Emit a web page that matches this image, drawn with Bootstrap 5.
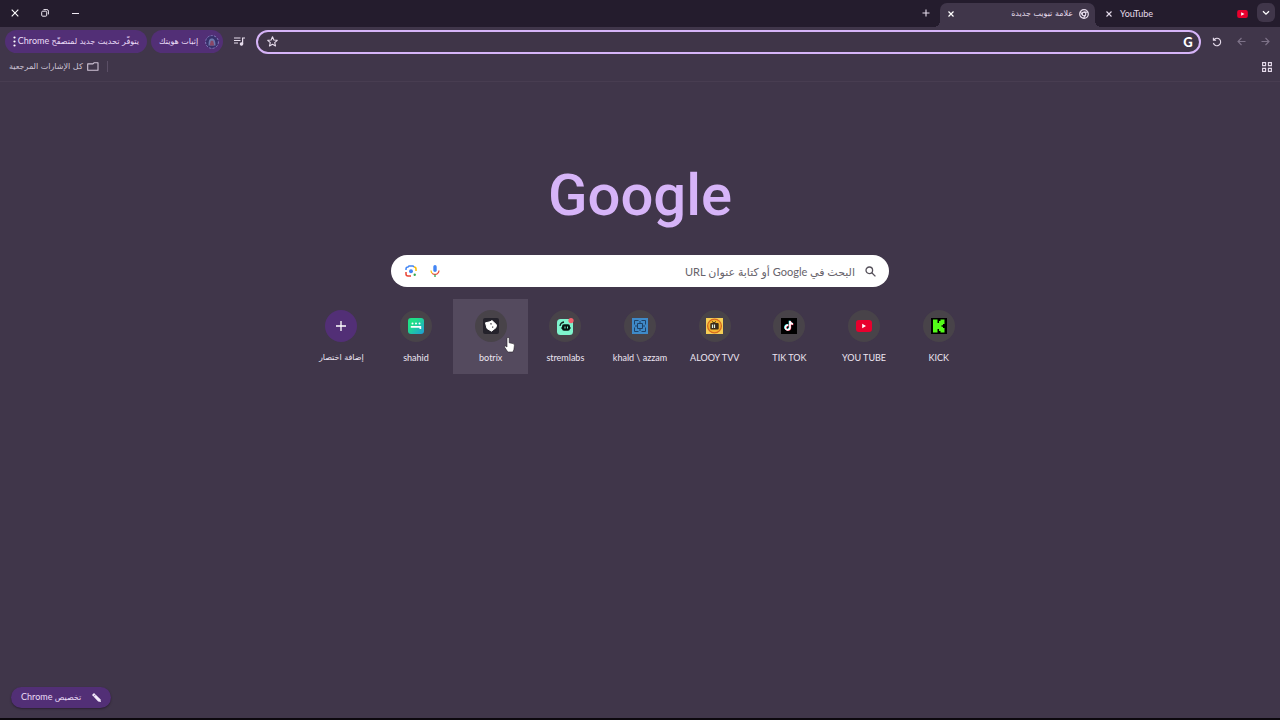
<!DOCTYPE html>
<html lang="ar" dir="rtl">
<head>
<meta charset="utf-8">
<meta name="viewport" content="width=device-width, initial-scale=1">
<title>علامة تبويب جديدة</title>
<link href="https://cdn.jsdelivr.net/npm/bootstrap@5.3.0/dist/css/bootstrap.min.css" rel="stylesheet">
<style>
:root{--strip:#241c2d;--panel:#40364a;--chip:#522f76;--lilac:#d6b4f8;--ink:#e6dcec}
body{background:var(--panel);color:var(--ink);font-family:Lato,"DejaVu Sans",sans-serif;font-size:9px;line-height:12px;border-bottom:2px solid #0c080e;overflow:hidden}
svg{display:block;flex:none}
button,input{font:inherit;color:inherit}
.plain{background:none;border:0;padding:0;color:inherit;display:flex;align-items:center;justify-content:center;width:24px;height:20px}
.strip{background:var(--strip);height:27px;padding:3px 5px 0 0}
.tab-search{width:18px;height:19px;background:#40364a;border-radius:6px}
.page-tab{height:24px}
.tab-idle{width:162px;padding:0 9px 3px 9px}
.tab-live{width:155px;background:var(--panel);border-radius:7px 7px 0 0;padding:0 6px 3px 6px;position:relative}
.tab-live::before,.tab-live::after{content:"";position:absolute;bottom:0;width:6px;height:6px}
.tab-live::before{right:-6px;background:radial-gradient(circle at 100% 0,transparent 6px,var(--panel) 6px)}
.tab-live::after{left:-6px;background:radial-gradient(circle at 0 0,transparent 6px,var(--panel) 6px)}
.tab-title{padding:0 6px}
.tab-close{width:10px;height:10px}
.new-tab{width:28px}
.win{width:30px}
.tools{height:29px;padding:0 3px 0 5px}
.faded{color:#7d7288}
.omni{height:24px;border:2px solid var(--lilac);border-radius:12px;background:#3f3548;padding:0 5px 0 9px;margin:0 4px 0 1px}
.omni input{background:none;border:0;outline:0;min-width:0}
.g-mark{font-weight:900;font-size:13px;color:#fff;width:12px}
.chip{background:var(--chip);border:0;border-radius:12px;height:23px;color:#eadcf6;white-space:nowrap}
.chip-id{width:72px}
.chip-update{width:142px}
.ar{font-family:"DejaVu Sans",sans-serif;font-size:8px}
.marks{height:26px;padding:0 8px 4px 9px;border-bottom:1px solid #483d51}
.marks a{color:#cfc4d6}
.rule{width:1px;height:11px;background:#5b4f66}
.wordmark{color:var(--lilac);font-family:Roboto,sans-serif;font-weight:500;font-size:58px;line-height:72px;margin:77px 0 0}
.find{width:498px;max-width:94%;height:32px;margin-top:24px;background:#fff;border-radius:16px;padding:0 13px 0 8px}
.find input{background:none;border:0;outline:0;color:#333;font-size:11px;line-height:20px;height:24px;min-width:0;padding:0 10px}
.find input::placeholder{color:#66626a;opacity:1}
.tiles{width:672px;max-width:100%;display:grid;grid-template-columns:repeat(9,1fr);margin-top:12px}
.tile{height:75px;padding-top:11px;color:#eee6f2;position:relative;white-space:nowrap}
.tile:hover{color:#fff}
.tile.hot{background:#544a5e}
.disc{width:32px;height:32px;border-radius:50%;background:#484349;margin-bottom:10px}
.disc.add{background:var(--chip)}
.pointer{position:absolute;left:51px;top:38px}
.custom{height:21px;min-width:100px;margin:0 0 10px 11px;padding:0 10px;box-shadow:0 1px 2px #2a2031}
</style>
</head>
<body class="d-flex flex-column min-vh-100">
<header>
  <div class="strip d-flex align-items-start">
    <button class="plain tab-search" aria-label="البحث في علامات التبويب"><svg width="8" height="6" viewBox="0 0 8 6" fill="none" stroke="#fff" stroke-width="1.3"><path d="M1 1.2 4 4.2 7 1.2"/></svg></button>
    <div class="page-tab tab-idle d-flex align-items-center">
      <svg width="11" height="8" viewBox="0 0 16 12"><rect width="16" height="12" rx="3" fill="#e8002d"/><path d="M6 3.2v5.6L11 6z" fill="#fff"/></svg>
      <span class="flex-grow-1 text-start tab-title" dir="ltr">YouTube</span>
      <button class="plain tab-close" aria-label="إغلاق YouTube"><svg width="6" height="6" viewBox="0 0 6 6" stroke="#e6dcec" stroke-width="1.1"><path d="M.5.5l5 5M5.5.5l-5 5"/></svg></button>
    </div>
    <div class="page-tab tab-live d-flex align-items-center">
      <svg width="10" height="10" viewBox="0 0 10 10" fill="none" stroke="#e6dcec"><circle cx="5" cy="5" r="4.3" stroke-width="1.2"/><circle cx="5" cy="5" r="1.8" stroke-width="1.2"/><path d="M5 3.1h4M3.4 6 1.3 2.6M6.6 6 4.6 9.3" stroke-width="1.2"/></svg>
      <span class="flex-grow-1 ar tab-title">علامة تبويب جديدة</span>
      <button class="plain tab-close" aria-label="إغلاق"><svg width="6" height="6" viewBox="0 0 6 6" stroke="#fff" stroke-width="1.2"><path d="M.5.5l5 5M5.5.5l-5 5"/></svg></button>
    </div>
    <button class="plain new-tab" aria-label="علامة تبويب جديدة"><svg width="8" height="8" viewBox="0 0 8 8" stroke="#e6dcec" stroke-width="1.1"><path d="M4 .5v7M.5 4h7"/></svg></button>
    <div class="flex-grow-1"></div>
    <button class="plain win" aria-label="تصغير"><svg width="7" height="7" viewBox="0 0 7 7" stroke="#f0eaf4"><path d="M0 3.5h7"/></svg></button>
    <button class="plain win" aria-label="استعادة"><svg width="8" height="8" viewBox="0 0 8 8" fill="none" stroke="#f0eaf4"><rect x=".7" y="2.2" width="5" height="5" rx="1"/><path d="M2.5.6h3.4a1.5 1.5 0 0 1 1.5 1.5v3.3"/></svg></button>
    <button class="plain win" aria-label="إغلاق النافذة"><svg width="8" height="8" viewBox="0 0 8 8" stroke="#fff" stroke-width="1.1"><path d="M.7.7l6.6 6.6M7.3.7.7 7.3"/></svg></button>
  </div>
  <nav class="tools d-flex align-items-center">
    <button class="plain faded" aria-label="التقدم"><svg width="9" height="9" viewBox="0 0 9 9" fill="none" stroke="currentColor" stroke-width="1.1"><path d="M.5 4.5h7.4M4.5 1l3.5 3.5L4.5 8"/></svg></button>
    <button class="plain faded" aria-label="الرجوع"><svg width="9" height="9" viewBox="0 0 9 9" fill="none" stroke="currentColor" stroke-width="1.1"><path d="M8.500 4.500H1.100M4.500 1 1 4.500 4.500 8"/></svg></button>
    <button class="plain" aria-label="إعادة التحميل"><svg width="10" height="10" viewBox="0 0 10 10" fill="none" stroke="currentColor" stroke-width="1.1"><path d="M1.900 2.900A3.700 3.700 0 1 1 1.400 6M1.400.8v2.500h2.700"/></svg></button>
    <div class="omni d-flex align-items-center flex-grow-1">
      <span class="g-mark text-center">G</span>
      <input class="flex-grow-1" type="text" aria-label="شريط العناوين">
      <svg width="11" height="11" viewBox="0 0 12 12" fill="none" stroke="#e6dcec" stroke-width="1.2" stroke-linejoin="round"><path d="M6 .9 7.500 4.400l3.700.3-2.800 2.500.9 3.700L6 9 2.700 10.900l.9-3.700L.8 4.700l3.700-.3z"/></svg>
    </div>
    <button class="plain mx-1" aria-label="التحكم في الوسائط"><svg width="11" height="9" viewBox="0 0 11 9" fill="none" stroke="currentColor" stroke-width="1.200"><path d="M0 1h6.500M0 3.500h6.500M0 6h4M8.600 7V1H11"/><circle cx="7.500" cy="7" r="1.200" fill="currentColor"/></svg></button>
    <button class="chip chip-id d-flex align-items-center justify-content-between ps-2 pe-1 ms-1"><svg width="14" height="14" viewBox="0 0 12 12"><circle cx="6" cy="6" r="5.500" fill="#37306b" stroke="#8f86c8" stroke-width=".7" stroke-dasharray="2 1"/><path d="M3 9c0-5 1-6 3-6s3 2 3 6z" fill="#6d78ad"/><path d="M5 5h2l1 4H4z" fill="#8a4666"/></svg><span class="ar">إثبات هويتك</span></button>
    <button class="chip chip-update d-flex align-items-center justify-content-between px-2"><span><span class="ar">يتوفّر تحديث جديد لمتصفّح</span> Chrome</span><svg width="3" height="11" viewBox="0 0 3 11" fill="#fff"><circle cx="1.500" cy="1.500" r="1.100"/><circle cx="1.500" cy="5.500" r="1.100"/><circle cx="1.500" cy="9.500" r="1.100"/></svg></button>
  </nav>
  <nav class="marks d-flex align-items-center">
    <button class="plain tab-close" aria-label="مجموعات علامات التبويب"><svg width="10" height="10" viewBox="0 0 10 10" fill="none" stroke="currentColor" stroke-width="1.100"><path d="M.6.6h3v3h-3zM6.400.6h3v3h-3zM.6 6.400h3v3h-3zM6.400 6.400h3v3h-3z"/></svg></button>
    <span class="rule me-auto ms-2"></span>
    <a href="#" class="d-flex align-items-center gap-1 text-decoration-none"><svg width="12" height="9" viewBox="0 0 12 9" fill="none" stroke="currentColor" stroke-width="1.100"><path d="M1.500 1.900H6L7.200.7H11v7.600H.7V1.900z" stroke-linejoin="round"/></svg><span class="ar">كل الإشارات المرجعية</span></a>
  </nav>
</header>
<main class="flex-grow-1 d-flex flex-column align-items-center">
  <h1 class="wordmark" dir="ltr">Google</h1>
  <form class="find d-flex align-items-center" role="search">
    <svg width="11" height="11" viewBox="0 0 11 11" fill="none" stroke="#55505a" stroke-width="1.300"><circle cx="4.300" cy="4.300" r="3.300"/><path d="m6.800 6.800 3.600 3.600"/></svg>
    <input class="flex-grow-1" type="text" aria-label="بحث" placeholder="البحث في Google أو كتابة عنوان URL">
    <button type="button" class="plain" aria-label="البحث الصوتي"><svg width="10" height="12" viewBox="0 0 10 12" fill="none"><rect x="3.300" y="0" width="3.400" height="7" rx="1.700" fill="#4285f4"/><path d="M1 5.500A4 4 0 0 0 2.500 8.600" stroke="#fbbc04" stroke-width="1.200"/><path d="M2.300 8.400Q5 10.400 7.700 8.400 9 7.200 9 5.500" stroke="#ea4335" stroke-width="1.200"/><path d="M5 9.500V12" stroke="#34a853" stroke-width="1.300"/></svg></button>
    <button type="button" class="plain" aria-label="البحث بالصورة"><svg width="12" height="12" viewBox="0 0 12 12" fill="none" stroke-width="1.500"><path d="M1 5V4a2 2 0 0 1 2-2l1-1h4l1 1" stroke="#4285f4"/><path d="M9 2a2 2 0 0 1 2 2v2" stroke="#fbbc04"/><path d="M1 7v2a2 2 0 0 0 2 2h3" stroke="#ea4335"/><circle cx="6" cy="6.300" r="2" fill="#4285f4"/><circle cx="9.700" cy="9.800" r="1.200" fill="#34a853"/></svg></button>
  </form>
  <nav class="tiles">
    <a href="#" class="tile d-flex flex-column align-items-center text-decoration-none"><span class="disc d-flex align-items-center justify-content-center"><svg width="16" height="16" viewBox="0 0 16 16"><rect width="16" height="16" fill="#000"/><path d="M2 1.500h4.500v3.500H8V3h1.500V1.500h4v4.500H12v1.200h-1.500v1.600H12V10h1.500v4.500h-4V13H8v-2H6.500v3.500H2z" fill="#53fc18"/></svg></span>KICK</a>
    <a href="#" class="tile d-flex flex-column align-items-center text-decoration-none"><span class="disc d-flex align-items-center justify-content-center"><svg width="16" height="12" viewBox="0 0 16 12"><rect width="16" height="12" rx="3" fill="#e8002d"/><path d="M6.200 3.700v4.600L10 6z" fill="#fff"/></svg></span>YOU TUBE</a>
    <a href="#" class="tile d-flex flex-column align-items-center text-decoration-none"><span class="disc d-flex align-items-center justify-content-center"><svg width="16" height="16" viewBox="0 0 16 16" fill="none"><rect width="16" height="16" fill="#000"/><g stroke-width="1.700"><path d="M7.300 7.300a2.300 2.300 0 1 0 1.700 2.300V3q.3 2.800 3 3" stroke="#25f4ee" transform="translate(-.5 -.3)"/><path d="M7.300 7.300a2.300 2.300 0 1 0 1.700 2.300V3q.3 2.800 3 3" stroke="#fe2c55" transform="translate(.4 .3)"/><path d="M7.300 7.300a2.300 2.300 0 1 0 1.700 2.300V3q.3 2.800 3 3" stroke="#fff"/></g></svg></span>TIK TOK</a>
    <a href="#" class="tile d-flex flex-column align-items-center text-decoration-none"><span class="disc d-flex align-items-center justify-content-center"><svg width="17" height="16" viewBox="0 0 17 16" fill="none"><rect width="17" height="16" fill="#f6cf55"/><circle cx="8.500" cy="8" r="6.900" fill="#f3b52f" stroke="#d66a1f" stroke-width="1.300"/><rect x="4.300" y="5" width="8.400" height="6.400" rx="1" fill="#3a2b1b"/><path d="M6.500 6.500v3.600M8.500 6.500v3.600" stroke="#dff0df" stroke-width="1.200"/><path d="M6 3.500l2 1.500 2-1.500" stroke="#3a2b1b"/></svg></span>ALOOY TVV</a>
    <a href="#" class="tile d-flex flex-column align-items-center text-decoration-none"><span class="disc d-flex align-items-center justify-content-center"><svg width="16" height="16" viewBox="0 0 16 16" fill="none"><rect width="16" height="16" fill="#3f8ac8"/><g stroke="#1f4268" stroke-width="1"><path d="M6.500 2.500h-4v4M9.500 2.500h4v4M6.500 13.500h-4v-4M9.500 13.500h4v-4"/><path d="M5.500 5.500h5v5h-5z"/><path d="M8 3v2.500M8 10.500V13M3 8h2.500M10.500 8H13"/></g></svg></span><span dir="ltr">khald \ azzam</span></a>
    <a href="#" class="tile d-flex flex-column align-items-center text-decoration-none"><span class="disc d-flex align-items-center justify-content-center"><svg width="17" height="17" viewBox="0 0 17 17" fill="none"><rect y="1" width="16" height="16" rx="3.500" fill="#7ff5cd"/><path d="M3 8q.5-3.500 4-4" stroke="#10251e" stroke-width="1.300"/><rect x="5" y="6.300" width="8" height="6.500" rx="2" fill="#081410"/><path d="M4.500 10h9" stroke="#081410" stroke-width="2"/><path d="M8 8.500v2M10.500 8.500v2" stroke="#7ff5cd"/><circle cx="14" cy="2.600" r="2.600" fill="#f1606b"/></svg></span>stremlabs</a>
    <a href="#" class="tile hot d-flex flex-column align-items-center text-decoration-none"><span class="disc d-flex align-items-center justify-content-center"><svg width="16" height="16" viewBox="0 0 16 16"><rect width="16" height="16" rx="2" fill="#24222b"/><path d="M2.500 4.800 7 3.800 9 2.600l4.500 4.200-.5 2.800L8.500 13.200 4 10.500z" fill="#fff" stroke="#fff" stroke-width="1" stroke-linejoin="round"/><path d="M7 5.200l2 .3-1 1.500zM9.300 8.300l1.400.7-1.500 1z" fill="#24222b"/></svg></span>botrix
      <svg class="pointer" width="11" height="16" viewBox="0 0 11 16"><path d="M3 1.500a1.100 1.100 0 0 1 2.200 0v4.300l3.900.8q1.500.4 1.300 2l-.5 3.800-1 2.600H3.800L.7 10.300q-.5-1.400 1-1.200L3 10z" fill="#fff" stroke="#252028" stroke-width=".6"/></svg></a>
    <a href="#" class="tile d-flex flex-column align-items-center text-decoration-none"><span class="disc d-flex align-items-center justify-content-center"><svg width="16" height="16" viewBox="0 0 16 16"><defs><linearGradient id="sh" x1="0" y1="0" x2="1" y2="1"><stop offset=".3" stop-color="#1fe087"/><stop offset="1" stop-color="#1f9bd8"/></linearGradient></defs><rect width="16" height="16" rx="3" fill="url(#sh)"/><path d="M2.800 8h10.400v3h-1.700V9.700H2.800z" fill="#fff"/><g fill="#fff"><circle cx="4.500" cy="5.500" r="1"/><circle cx="8" cy="5.500" r="1"/><circle cx="11.500" cy="5.500" r="1"/></g></svg></span>shahid</a>
    <a href="#" class="tile d-flex flex-column align-items-center text-decoration-none"><span class="disc add d-flex align-items-center justify-content-center"><svg width="10" height="10" viewBox="0 0 10 10" stroke="#fff" stroke-width="1.300"><path d="M5 0v10M0 5h10"/></svg></span><span class="ar">إضافة اختصار</span></a>
  </nav>
</main>
<footer class="d-flex justify-content-end">
  <button class="chip custom d-flex align-items-center justify-content-between"><svg width="9" height="9" viewBox="0 0 9 9" fill="#f3e9fb"><path d="M0 2 2 0l6.400 6.200L9 9l-2.800-.6z"/><path d="M1.600 3.600 3.600 1.600" stroke="#522f76" stroke-width=".6"/></svg><span><span class="ar">تخصيص</span> Chrome</span></button>
</footer>
<script src="https://cdn.jsdelivr.net/npm/bootstrap@5.3.0/dist/js/bootstrap.bundle.min.js"></script>
</body>
</html>
